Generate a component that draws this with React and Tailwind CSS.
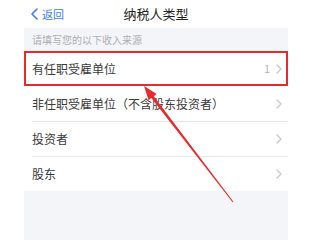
const rows = [
  { label: '有任职受雇单位', count: '1', boxed: true },
  { label: '非任职受雇单位（不含股东投资者）' },
  { label: '投资者' },
  { label: '股东' },
];

const Chevron = () => (
  <svg width="6" height="10" viewBox="0 0 6 10" className="shrink-0">
    <path d="M1 1l4 4-4 4" fill="none" stroke="#c7c7cc" strokeWidth="1.3" strokeLinecap="round" strokeLinejoin="round" />
  </svg>
);

const App = () => {
  return (
    <div className="w-[320px] h-[240px] bg-white overflow-hidden font-['Noto_Sans_CJK_SC',sans-serif]">
      <div className="ml-[24px] w-[264px] h-full bg-[#f4f5f9] flex flex-col relative">
        <div className="h-[28px] bg-white relative flex items-center shrink-0">
          <div className="flex items-center pl-[7px] text-[11px] text-[#3a7df5] gap-[4px]">
            <svg width="7" height="12" viewBox="0 0 7 12">
              <path d="M6 1L1 6l5 5" fill="none" stroke="#3a7df5" strokeWidth="1.6" strokeLinecap="round" strokeLinejoin="round" />
            </svg>
            <span>返回</span>
          </div>
          <div className="absolute inset-0 flex items-center justify-center text-[13px] text-[#222]">纳税人类型</div>
        </div>

        <div className="h-[23px] flex items-center pl-[8px] text-[10px] text-[#adadb2] shrink-0">请填写您的以下收入来源</div>

        <div className="bg-white flex flex-col">
          {rows.map((r, i) => (
            <div
              key={r.label}
              className={
                r.boxed
                  ? 'h-[35px] flex items-center pl-[6px] border-2 border-[#ea2a2a]'
                  : 'h-[35px] flex items-center pl-[8px]'
              }
            >
              <div
                className={
                  i > 1
                    ? 'flex-1 h-full flex items-center pr-[6px] border-t border-[#e8e8ec]'
                    : r.boxed
                    ? 'flex-1 h-full flex items-center pr-[4px]'
                    : 'flex-1 h-full flex items-center pr-[6px]'
                }
              >
                <span className="flex-1 text-[12px] text-[#3a3a3a]">{r.label}</span>
                {r.count && <span className="text-[11px] text-[#b5b5b5] mr-[6px]">{r.count}</span>}
                <Chevron />
              </div>
            </div>
          ))}
        </div>

        <svg className="absolute left-0 top-0 pointer-events-none" width="264" height="240" viewBox="0 0 264 240">
          <polygon
            points="120,86 132.6,94 129.8,96.2 209.4,201.7 208.6,202.3 127.4,98 124.6,100.2"
            fill="#ea2a2a"
          />
        </svg>
      </div>
    </div>
  );
};

export default App;
